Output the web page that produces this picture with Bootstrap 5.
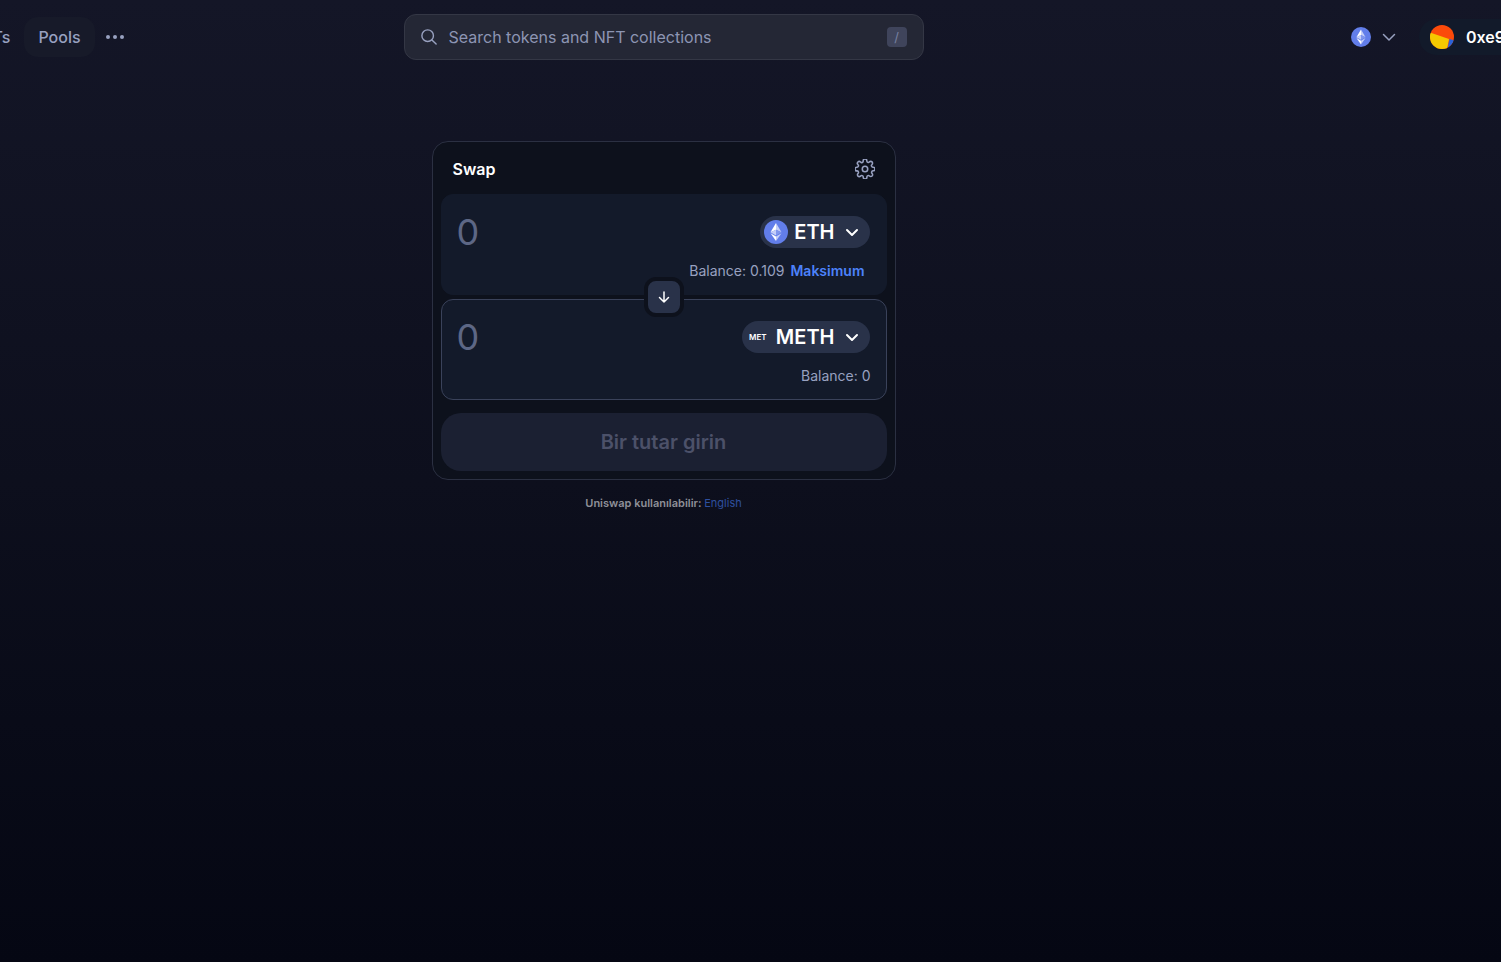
<!DOCTYPE html>
<html lang="tr">
<head>
<meta charset="utf-8">
<meta name="viewport" content="width=device-width, initial-scale=1">
<title>Uniswap</title>
<link href="https://cdn.jsdelivr.net/npm/bootstrap@5.3.0/dist/css/bootstrap.min.css" rel="stylesheet">
<style>
  :root { --muted: #98a1c0; --module: #131a2a; --surface: #0d111c; --chip: #293249; --scroll: 174px; }
  body { font-family: Inter, sans-serif; color: #fff; background: #050713; overflow-x: hidden; }
  /* The shell is scrolled sideways by --scroll */
  .shell { margin-left: calc(-1 * var(--scroll)); min-height: 100vh; background: linear-gradient(#141627, #0d0f1d 50%, #050713); }
  .topbar { height: 72px; padding-top: 1px; }
  .side-l, .side-r { flex: 1 1 0; }
  .side-r { gap: 20px; }
  .first-link { margin-left: 131px; }
  .top-link { padding: 8px 14px; border-radius: 14px; color: var(--muted); font-weight: 500; line-height: 24px; text-decoration: none; }
  .top-link.current { background: #171a29; }
  .plain { border: 0; background: none; padding: 0; color: var(--muted); }
  .search { flex: 0 1 520px; height: 46px; border: 1px solid #343745; border-radius: 12px; background: #242735; padding: 0 16px; color: var(--muted); }
  .search input { background: none; border: 0; outline: 0; padding: 0; color: var(--muted); line-height: 24px; }
  .search input::placeholder { color: #8d95b3; opacity: 1; }
  .slash { width: 20px; height: 20px; border-radius: 4px; background: #3f445b; color: #7780a0; font-size: 13px; line-height: 20px; }
  .wallet { width: 82px; height: 36px; border-radius: 18px 0 0 18px; background: #121a2a; gap: 12px; padding: 0 11px; overflow: hidden; color: #fff; font-weight: 600; white-space: nowrap; }
  .swap { width: 464px; max-width: 100%; background: var(--surface); border: 1px solid #2b3042; border-radius: 16px; padding: 8px; margin-top: 69px; }
  .swap-head { height: 44px; padding: 6px 12px 12px; }
  .swap-head h1 { font-size: 16px; line-height: 24px; font-weight: 600; }
  .panel { background: var(--module); border: 1px solid var(--module); border-radius: 12px; padding: 21px 16px 12px 15px; height: 101px; }
  .panel.outlined { border-color: #3a425a; }
  .amount { background: none; border: 0; outline: 0; padding: 0; font-size: 36px; line-height: 32px; height: 32px; color: #5d6785; min-width: 0; flex: 1; }
  .amount::placeholder { color: #5d6785; opacity: 1; }
  .token { height: 32px; border: 0; border-radius: 16px; background: var(--chip); color: #fff; font-size: 20px; font-weight: 600; line-height: 24px; padding: 0 8px 0 4px; }
  .token b { font-weight: 600; margin: 0 7px 0 6px; }
  .no-logo { width: 24px; font-size: 8px; line-height: 24px; font-weight: 600; }
  .balance { font-size: 14px; line-height: 20px; color: var(--muted); margin: 13px -1px 0 0; }
  .max { color: #4c82fb; font-weight: 600; margin: 0 6px; }
  .joint { height: 4px; z-index: 1; }
  .flip { flex: none; width: 40px; height: 40px; border: 4px solid var(--surface); border-radius: 12px; background: var(--chip); padding: 0; }
  .submit { height: 58px; border: 0; border-radius: 20px; background: #1b2032; color: #4c5169; font-size: 20px; font-weight: 600; margin-top: 13px; }
  .locale { font-size: 11px; line-height: 16px; font-weight: 600; color: #8f9098; margin-top: 15px; }
  .locale a { color: #2f509f; font-weight: 400; text-decoration: none; }
  svg { display: block; flex: none; }
</style>
</head>
<body>
<svg width="0" height="0" class="position-absolute" aria-hidden="true">
  <symbol id="eth" viewBox="0 0 24 24">
    <circle cx="12" cy="12" r="12" fill="#627eea"/>
    <path d="M12 3v6.700l5.500 2.500z" fill="#c5cff8"/><path d="M12 3 6.500 12.200l5.500-2.500z" fill="#fff"/>
    <path d="M12 9.700v5.700l5.500-3.200z" fill="#8197ee"/><path d="M12 9.700v5.700l-5.500-3.200z" fill="#c5cff8"/>
    <path d="M12 16.500V21l5.500-7.700z" fill="#c5cff8"/><path d="M12 16.500V21l-5.500-7.700z" fill="#fff"/>
  </symbol>
</svg>
<div class="shell">
  <header class="topbar d-flex align-items-center">
    <nav class="side-l d-flex align-items-center" aria-label="Main">
      <a class="top-link first-link" href="#">NFTs</a>
      <a class="top-link current" href="#">Pools</a>
      <button class="plain py-2 px-2" type="button" aria-label="More">
        <svg width="24" height="24" viewBox="0 0 24 24" fill="currentColor"><circle cx="5" cy="12" r="2"/><circle cx="12" cy="12" r="2"/><circle cx="19" cy="12" r="2"/></svg>
      </button>
    </nav>
    <label class="search d-flex align-items-center">
      <svg width="16" height="16" viewBox="0 0 18 18" fill="none" stroke="currentColor" stroke-width="1.600" stroke-linecap="round"><circle cx="7.500" cy="7.500" r="6.500"/><path d="m12.300 12.300 4.700 4.700"/></svg>
      <input class="flex-grow-1 ms-2 ps-1" type="text" placeholder="Search tokens and NFT collections" aria-label="Search">
      <span class="slash text-center">/</span>
    </label>
    <div class="side-r d-flex align-items-center justify-content-end">
      <button class="plain d-flex align-items-center" type="button" aria-label="Network">
        <svg width="20" height="20"><use href="#eth"/></svg>
        <svg class="ms-2" width="20" height="16" viewBox="0 0 20 16" fill="none" stroke="currentColor" stroke-width="1.500" stroke-linecap="round" stroke-linejoin="round"><path d="m4.500 5.500 5.500 5.500 5.500-5.500"/></svg>
      </button>
      <button class="plain wallet d-flex align-items-center" type="button">
        <svg width="24" height="24" viewBox="0 0 24 24"><defs><clipPath id="round"><circle cx="12" cy="12" r="12"/></clipPath></defs><g clip-path="url(#round)"><path d="M0 0h24v24H0z" fill="#fb4a0a"/><path d="M0 7.500 19 14l-2 10H0z" fill="#f5c800"/><path d="m19.500 14 5 1.500V24h-7z" fill="#2b63d9"/></g></svg>
        <span>0xe9</span>
      </button>
    </div>
  </header>

  <main class="d-flex flex-column align-items-center">
    <form class="swap">
      <div class="swap-head d-flex align-items-center justify-content-between">
        <h1 class="mb-0">Swap</h1>
        <button class="plain" type="button" aria-label="Settings">
          <svg width="20" height="20" viewBox="1 1 22 22" fill="none" stroke="currentColor" stroke-width="1.700" stroke-linejoin="round"><circle cx="12" cy="12" r="3"/><path d="M19.400 15a1.650 1.650 0 0 0 .33 1.820l.06.06a2 2 0 1 1-2.830 2.830l-.06-.06a1.650 1.650 0 0 0-2.820 1.170V21a2 2 0 0 1-4 0v-.09A1.650 1.650 0 0 0 7.180 19.730l-.06.06a2 2 0 1 1-2.830-2.830l.06-.06a1.650 1.650 0 0 0-1.170-2.820H3a2 2 0 0 1 0-4h.09A1.650 1.650 0 0 0 4.270 7.180l-.06-.06a2 2 0 1 1 2.830-2.830l.06.06A1.650 1.650 0 0 0 10 3.090V3a2 2 0 0 1 4 0v.09a1.650 1.650 0 0 0 2.820 1.170l.06-.06a2 2 0 1 1 2.830 2.830l-.06.06A1.650 1.650 0 0 0 20.910 10H21a2 2 0 0 1 0 4h-.09a1.650 1.650 0 0 0-1.510 1z"/></svg>
        </button>
      </div>
      <div class="panel">
        <div class="d-flex align-items-center">
          <input class="amount" type="text" placeholder="0" aria-label="Amount to sell">
          <button class="token d-flex align-items-center" type="button">
            <svg width="24" height="24"><use href="#eth"/></svg><b>ETH</b>
            <svg width="20" height="20" viewBox="0 0 20 20" fill="none" stroke="currentColor" stroke-width="2" stroke-linecap="round" stroke-linejoin="round"><path d="m5 8 5 5 5-5"/></svg>
          </button>
        </div>
        <div class="balance d-flex justify-content-end"><span>Balance: 0.109</span><button class="plain max" type="button">Maksimum</button></div>
      </div>
      <div class="joint position-relative d-flex align-items-center justify-content-center">
        <button class="flip d-flex align-items-center justify-content-center" type="button" aria-label="Switch tokens">
          <svg width="16" height="16" viewBox="0 0 16 16" fill="none" stroke="#fff" stroke-width="1.500" stroke-linecap="round" stroke-linejoin="round"><path d="M8 3v10M3.500 8.500 8 13l4.500-4.500"/></svg>
        </button>
      </div>
      <div class="panel outlined">
        <div class="d-flex align-items-center">
          <input class="amount" type="text" placeholder="0" aria-label="Amount to buy">
          <button class="token d-flex align-items-center" type="button">
            <span class="no-logo text-center">MET</span><b>METH</b>
            <svg width="20" height="20" viewBox="0 0 20 20" fill="none" stroke="currentColor" stroke-width="2" stroke-linecap="round" stroke-linejoin="round"><path d="m5 8 5 5 5-5"/></svg>
          </button>
        </div>
        <div class="balance text-end">Balance: 0</div>
      </div>
      <button class="submit w-100 d-block" type="submit" disabled>Bir tutar girin</button>
    </form>
    <p class="locale mb-0">Uniswap kullanılabilir: <a href="#">English</a></p>
  </main>
</div>
<script src="https://cdn.jsdelivr.net/npm/bootstrap@5.3.0/dist/js/bootstrap.bundle.min.js"></script>
</body>
</html>
